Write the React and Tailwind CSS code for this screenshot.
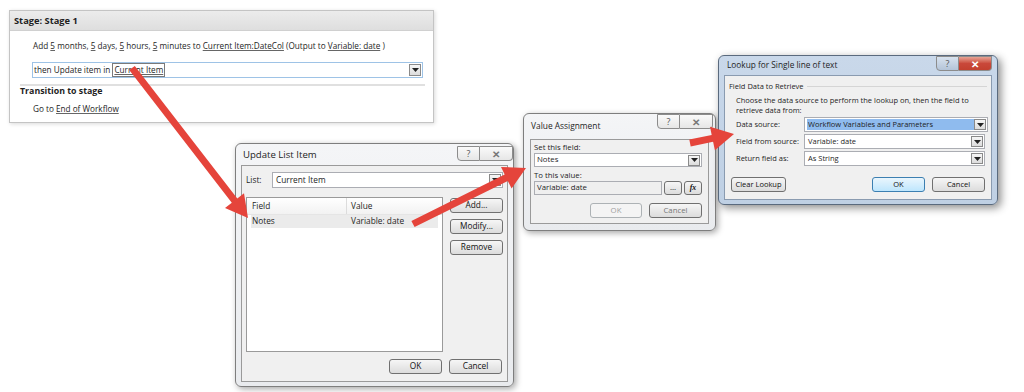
import React from "react";

function arrowPoints(x1, y1, x2, y2, w = 7, L = 22, H = 24) {
  const dx = x2 - x1, dy = y2 - y1;
  const len = Math.hypot(dx, dy);
  const ux = dx / len, uy = dy / len;
  const px = -uy, py = ux;
  const bx = x2 - ux * L, by = y2 - uy * L;
  const pts = [
    [x1 + px * w / 2, y1 + py * w / 2],
    [bx + px * w / 2, by + py * w / 2],
    [bx + px * H / 2, by + py * H / 2],
    [x2, y2],
    [bx - px * H / 2, by - py * H / 2],
    [bx - px * w / 2, by - py * w / 2],
    [x1 - px * w / 2, y1 - py * w / 2],
  ];
  return pts.map((p) => p.map((v) => v.toFixed(1)).join(",")).join(" ");
}

function Btn({ children, className = "", disabled = false, primary = false }) {
  return (
    <div
      className={
        "flex shrink-0 items-center justify-center whitespace-nowrap rounded-[3px] border leading-none " +
        (primary
          ? "border-[#3c7fb1] bg-gradient-to-b from-[#eaf6fd] to-[#bee6fd] text-[#111] "
          : disabled
          ? "border-[#adb2b5] bg-[#f4f4f4] text-[#a0a0a0] "
          : "border-[#707070] bg-gradient-to-b from-[#f6f6f6] to-[#dcdcdc] text-[#111] ") +
        className
      }
    >
      {children}
    </div>
  );
}

function DropBtn({ className = "" }) {
  return (
    <div className={"ml-auto flex shrink-0 items-center justify-center border border-[#8a8a8a] bg-gradient-to-b from-[#f6f6f6] to-[#dcdcdc] " + className}>
      <svg width="7" height="4" viewBox="0 0 7 4"><polygon points="0,0 7,0 3.5,4" fill="#222" /></svg>
    </div>
  );
}

function TitleBtns({ red = false, className = "" }) {
  return (
    <div className={"absolute flex " + className}>
      <div className={"flex w-[23px] items-center justify-center rounded-bl-[4px] border border-[#8c8c8c] " + (red ? "bg-gradient-to-b from-[#d8e2ee] to-[#b4c4d8]" : "bg-gradient-to-b from-[#fafafa] to-[#e6e6e6]")}>
        <span className="text-[9px] leading-none text-[#555]">?</span>
      </div>
      <div className={"flex w-[33px] items-center justify-center rounded-br-[4px] border border-l-0 border-[#8c8c8c] " + (red ? "bg-gradient-to-b from-[#e6a294] via-[#c9483a] to-[#c2402f]" : "bg-gradient-to-b from-[#fafafa] to-[#e6e6e6]")}>
        <span className={"text-[10px] font-bold leading-none " + (red ? "text-white" : "text-[#777]")}>✕</span>
      </div>
    </div>
  );
}

function U({ children }) {
  return <span className="underline decoration-[#666]">{children}</span>;
}

function Select({ children, className = "", btn = "h-[11px] w-[12px]" }) {
  return (
    <div className={"flex items-center whitespace-nowrap border border-[#abadb3] bg-white " + className}>
      {children}
      <DropBtn className={"mr-[1px] " + btn} />
    </div>
  );
}

export default function App() {
  return (
    <div className="relative h-[392px] w-[1024px] overflow-hidden bg-white font-['Open_Sans','Noto_Sans',sans-serif] text-[#1e1e1e]">
      {/* Stage panel */}
      <div className="absolute left-[9px] top-[10px] flex h-[113px] w-[425px] flex-col border border-[#c4c4c4] bg-white shadow-[1px_1px_4px_rgba(0,0,0,0.15)]">
        <div className="flex h-[20px] items-center border-b border-[#d0d0d0] bg-gradient-to-b from-[#ececec] to-[#dedede] pl-[4px] text-[9.3px] font-bold">
          Stage: Stage 1
        </div>
        <div className="pl-[23px] pt-[8px] text-[8.2px] leading-[14px]">
          Add <U>5</U> months, <U>5</U> days, <U>5</U> hours, <U>5</U> minutes to <U>Current Item:DateCol</U> (Output to <U>Variable: date</U> )
        </div>
        <div className="ml-[22px] mt-[9px] flex h-[16px] w-[391px] items-center border border-[#9ec3e6] pl-[1px] text-[8.2px]">
          <span>then Update item in&nbsp;</span>
          <span className="border border-[#7a7a7a] px-[1px] leading-[12px]"><U>Current Item</U></span>
          <DropBtn className="mr-[1px] h-[12px] w-[12px]" />
        </div>
        <div className="ml-[10px] mr-[8px] mt-[6px] h-[2px] bg-[#e0e0e0]" />
        <div className="pl-[10px] text-[8.8px] font-bold leading-[10px]">Transition to stage</div>
        <div className="pl-[23px] pt-[6px] text-[8.2px] leading-[14px]">
          Go to <U>End of Workflow</U>
        </div>
      </div>

      {/* Update List Item */}
      <div className="absolute left-[235px] top-[143px] flex h-[244px] w-[279px] flex-col rounded-[6px] border border-[#7e7e7e] bg-gradient-to-b from-[#f4f5f7] to-[#e9ebee] px-[5px] pb-[4px] shadow-[2px_2px_6px_rgba(0,0,0,0.35)]">
        <div className="flex h-[21px] items-center pl-[2px] text-[9.6px] leading-none">Update List Item</div>
        <TitleBtns className="left-[221px] top-[2px] h-[15px]" />
        <div className="flex flex-1 flex-col border border-[#9a9a9a] bg-[#f0f0f0] px-[4px] pt-[6px] text-[8.3px]">
          <div className="flex h-[16px] items-center">
            <span className="w-[26px]">List:</span>
            <Select className="h-[16px] flex-1 pl-[3px]" btn="h-[12px] w-[12px]">Current Item</Select>
          </div>
          <div className="mt-[9px] flex gap-[7px]">
            <div className="h-[155px] w-[199px] border border-[#9a9a9a] bg-white">
              <div className="flex h-[17px] items-center border-b border-[#e5e5e5] bg-gradient-to-b from-white to-[#f2f2f2]">
                <div className="w-[100px] border-r border-[#dcdcdc] pl-[5px] leading-[16px]">Field</div>
                <div className="pl-[4px]">Value</div>
              </div>
              <div className="mx-[4px] flex h-[13px] items-center bg-[#ebebeb]">
                <div className="w-[96px] pl-[1px]">Notes</div>
                <div className="pl-[4px]">Variable: date</div>
              </div>
            </div>
            <div className="flex flex-col gap-[6px] pt-[1px] text-[8.3px]">
              <Btn className="h-[15px] w-[53px]">Add...</Btn>
              <Btn className="h-[15px] w-[53px]">Modify...</Btn>
              <Btn className="h-[15px] w-[53px]">Remove</Btn>
            </div>
          </div>
          <div className="mt-[7px] flex justify-end gap-[7px] pr-[1px]">
            <Btn className="h-[15px] w-[53px]">OK</Btn>
            <Btn className="h-[15px] w-[53px]">Cancel</Btn>
          </div>
        </div>
      </div>

      {/* Value Assignment */}
      <div className="absolute left-[523px] top-[113px] flex h-[118px] w-[193px] flex-col rounded-[6px] border border-[#7e7e7e] bg-gradient-to-b from-[#f4f5f7] to-[#e9ebee] px-[6px] pb-[6px] shadow-[2px_2px_6px_rgba(0,0,0,0.35)]">
        <div className="flex h-[25px] items-center pl-[1px] text-[8.4px] leading-none">Value Assignment</div>
        <TitleBtns className="left-[133px] top-[0px] h-[15px]" />
        <div className="flex flex-1 flex-col border border-[#9a9a9a] bg-[#f0f0f0] px-[3px] pt-[2px] text-[7.8px]">
          <div className="leading-[11px]">Set this field:</div>
          <Select className="mr-[3px] h-[14px] pl-[2px]">Notes</Select>
          <div className="mt-[3px] leading-[11px]">To this value:</div>
          <div className="flex gap-[2px] pr-[3px]">
            <div className="flex h-[14px] w-[134px] items-center border border-[#abadb3] bg-[#efefef] pl-[2px]">Variable: date</div>
            <Btn className="h-[14px] w-[18px]">...</Btn>
            <Btn className="h-[14px] w-[18px] font-['Liberation_Serif',serif] font-bold italic">fx</Btn>
          </div>
          <div className="mt-[8px] flex justify-end gap-[7px] pr-[3px]">
            <Btn disabled className="h-[15px] w-[52px]">OK</Btn>
            <Btn className="h-[15px] w-[53px] !text-[#777]">Cancel</Btn>
          </div>
        </div>
      </div>

      {/* Lookup */}
      <div className="absolute left-[718px] top-[55px] flex h-[150px] w-[280px] flex-col rounded-[6px] border border-[#5a6a7e] bg-gradient-to-b from-[#c9d8ea] to-[#bfd0e4] px-[5px] pb-[4px] shadow-[3px_3px_8px_rgba(0,0,0,0.45)]">
        <div className="flex h-[19px] items-center pl-[3px] pb-[1px] text-[8.3px] leading-none">Lookup for Single line of text</div>
        <TitleBtns red className="left-[217px] top-[0px] h-[15px]" />
        <div className="flex flex-1 flex-col whitespace-nowrap border border-[#8a9bb0] bg-[#f0f0f0] px-[4px] pt-[5px] text-[7.5px]">
          <div className="flex items-center leading-[11px]">
            <span className="pr-[3px]">Field Data to Retrieve</span>
            <div className="h-[1px] flex-1 bg-[#d5d5d5]" />
          </div>
          <div className="mt-[3px] pl-[7px] leading-[10px]">
            Choose the data source to perform the lookup on, then the field to
            <br />
            retrieve data from:
          </div>
          <div className="mt-[2px] flex flex-col gap-[2px] pl-[7px] pr-[2px]">
            <div className="flex h-[15px] items-center">
              <span className="w-[68px] shrink-0">Data source:</span>
              <Select className="h-[15px] flex-1 pl-[2px]">
                <div className="flex h-[11px] w-[167px] items-center bg-[#8fbbee] pl-[1px] leading-none">Workflow Variables and Parameters</div>
              </Select>
            </div>
            <div className="flex h-[15px] items-center">
              <span className="w-[68px] shrink-0">Field from source:</span>
              <Select className="h-[15px] flex-1 pl-[3px]">Variable: date</Select>
            </div>
            <div className="flex h-[15px] items-center">
              <span className="w-[68px] shrink-0">Return field as:</span>
              <Select className="h-[15px] flex-1 pl-[3px]">As String</Select>
            </div>
          </div>
          <div className="mt-[11px] flex gap-[7px] px-[2px]">
            <Btn className="h-[15px] w-[55px]">Clear Lookup</Btn>
            <div className="flex-1" />
            <Btn primary className="h-[15px] w-[53px]">OK</Btn>
            <Btn className="h-[15px] w-[53px]">Cancel</Btn>
          </div>
        </div>
      </div>

      {/* Arrows */}
      <svg className="pointer-events-none absolute left-0 top-0" width="1024" height="392">
        <g fill="#e5443b">
          <polygon points={arrowPoints(132, 68, 248, 218)} />
          <polygon points={arrowPoints(413, 224, 526, 168)} />
          <polygon points={arrowPoints(690, 143, 734, 134)} />
        </g>
      </svg>
    </div>
  );
}
